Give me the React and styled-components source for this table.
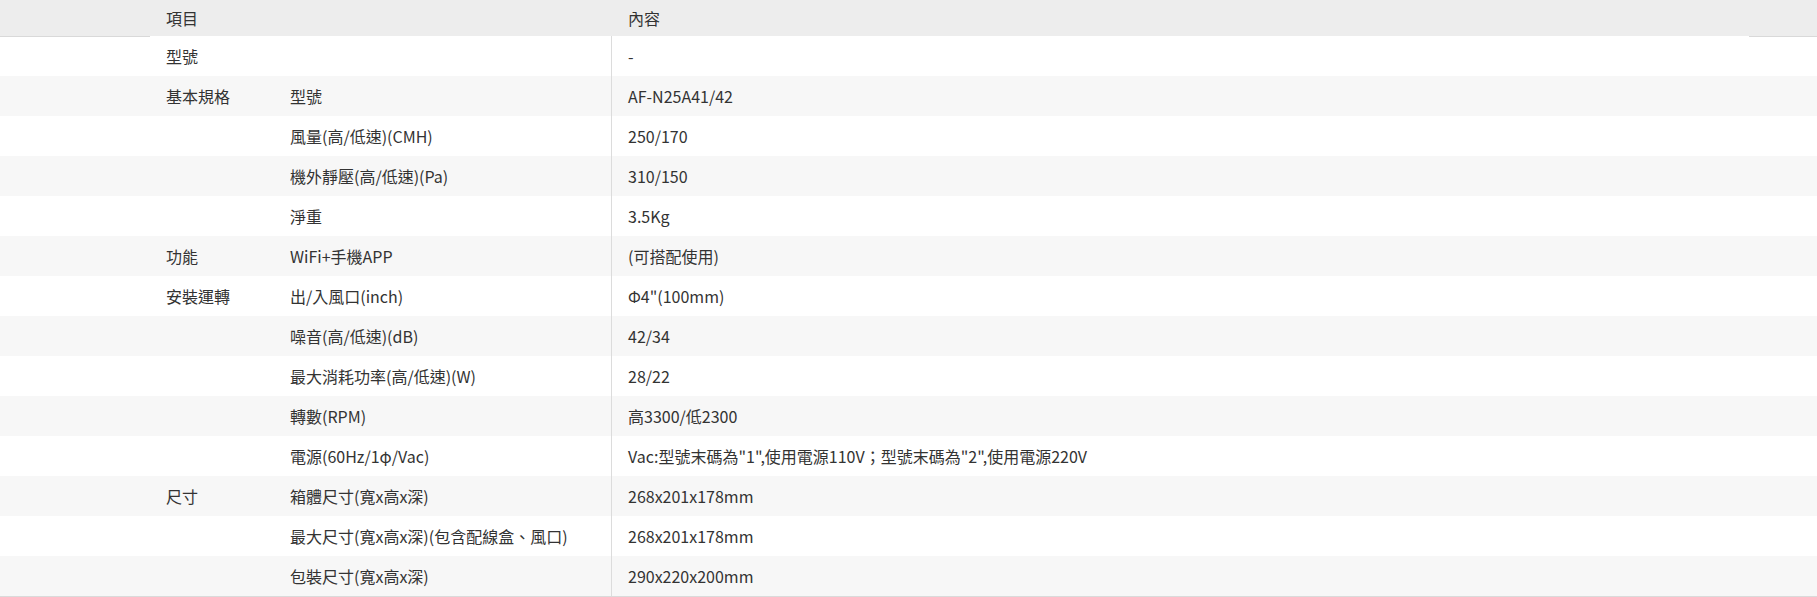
import React from "react";
import styled, { createGlobalStyle } from "styled-components";

const GlobalStyle = createGlobalStyle`
  html, body {
    margin: 0;
    padding: 0;
    background: #fff;
  }
  body {
    font-family: "Noto Sans CJK TC", "Noto Sans", sans-serif;
    color: #333;
  }
`;

const rows = [
  { group: "型號", item: "", value: "-" },
  { group: "基本規格", item: "型號", value: "AF-N25A41/42" },
  { group: "", item: "風量(高/低速)(CMH)", value: "250/170" },
  { group: "", item: "機外靜壓(高/低速)(Pa)", value: "310/150" },
  { group: "", item: "淨重", value: "3.5Kg" },
  { group: "功能", item: "WiFi+手機APP", value: "(可搭配使用)" },
  { group: "安裝運轉", item: "出/入風口(inch)", value: "Φ4\"(100mm)" },
  { group: "", item: "噪音(高/低速)(dB)", value: "42/34" },
  { group: "", item: "最大消耗功率(高/低速)(W)", value: "28/22" },
  { group: "", item: "轉數(RPM)", value: "高3300/低2300" },
  {
    group: "",
    item: "電源(60Hz/1φ/Vac)",
    value: "Vac:型號末碼為\"1\",使用電源110V；型號末碼為\"2\",使用電源220V",
  },
  { group: "尺寸", item: "箱體尺寸(寬x高x深)", value: "268x201x178mm" },
  { group: "", item: "最大尺寸(寬x高x深)(包含配線盒、風口)", value: "268x201x178mm" },
  { group: "", item: "包裝尺寸(寬x高x深)", value: "290x220x200mm" },
];

const App = () => {
  return (
    <>
      <GlobalStyle />
      <Table>
        <Header>
          <Edge />
          <HeadCell>項目</HeadCell>
          <HeadCell />
          <HeadCell>內容</HeadCell>
          <Edge />
        </Header>
        {rows.map((row, i) => (
          <Row key={i} $alt={i % 2 === 1}>
            <Edge $top={i === 0} />
            <Cell>{row.group}</Cell>
            <Cell $divider>{row.item}</Cell>
            <Cell>{row.value}</Cell>
            <Edge $top={i === 0} />
          </Row>
        ))}
      </Table>
    </>
  );
};

export default App;

const Table = styled.div`
  width: 100%;
  border-bottom: 1px solid #dadada;
  font-size: 16px;
  line-height: 20px;
`;

const grid = `
  display: grid;
  grid-template-columns: 150px 124px 338px 1fr 68px;
  align-items: stretch;
`;

const Header = styled.div`
  ${grid}
  height: 36px;
  background: #ededed;
`;

const HeadCell = styled.div`
  display: flex;
  align-items: center;
  padding-left: 16px;
  white-space: nowrap;
`;

const Row = styled.div`
  ${grid}
  height: 40px;
  background: ${(p) => (p.$alt ? "#f7f7f7" : "#fff")};
`;

const Edge = styled.div`
  box-shadow: ${(p) => (p.$top ? "inset 0 1px 0 #d9d9d9" : "none")};
`;

const Cell = styled.div`
  display: flex;
  align-items: center;
  padding-left: 16px;
  white-space: nowrap;
  border-right: ${(p) => (p.$divider ? "1px solid #dcdcdc" : "none")};
`;
